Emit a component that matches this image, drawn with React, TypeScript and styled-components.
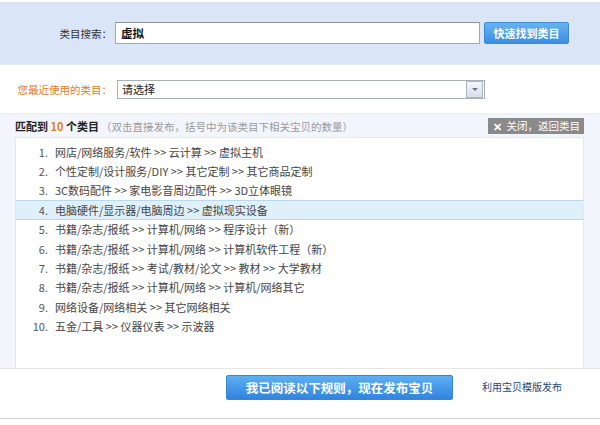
import styled, { createGlobalStyle } from "styled-components";

const GlobalStyle = createGlobalStyle`
  html, body {
    margin: 0;
    padding: 0;
    background: #fff;
  }
  body {
    font-family: "Noto Sans CJK SC", "Liberation Sans", sans-serif;
    font-size: 11px;
    color: #333;
  }
`

const Page = styled.div`
  width: 600px;
  height: 425px;
  display: flex;
  flex-direction: column;
`

const SearchBand = styled.div`
  margin-top: 2px;
  height: 62px;
  background: #dbe5f8;
  border-bottom: 1px solid #e4ebf8;
  display: flex;
  align-items: center;
`

const Label = styled.div<{ $orange?: boolean }>`
  width: 112px;
  text-align: right;
  flex-shrink: 0;
  font-size: 10.5px;
  color: ${({ $orange }) => ($orange ? "#e07b1e" : "#333")};
`

const SearchInput = styled.div`
  margin-left: 3px;
  width: 358px;
  height: 20px;
  border: 1px solid #a3a6ab;
  border-top-color: #8f949a;
  background: #fff;
  padding-left: 5px;
  font-size: 11.5px;
  line-height: 20px;
  color: #111;
  font-weight: bold;
`

const FindButton = styled.div`
  margin-left: 4px;
  width: 83px;
  height: 20px;
  border: 1px solid #3d8ad6;
  border-radius: 2px;
  background: linear-gradient(#67b3f2, #3a8ee2);
  color: #fff;
  font-weight: bold;
  font-size: 11px;
  line-height: 20px;
  text-align: center;
`

const RecentRow = styled.div`
  height: 48px;
  display: flex;
  align-items: center;
`

const Select = styled.div`
  margin-left: 5px;
  width: 362px;
  height: 17px;
  border: 1px solid #a9afb6;
  background: #fff;
  display: flex;
  align-items: center;
  justify-content: space-between;
  padding-left: 4px;
  font-size: 11px;
  color: #222;
`

const Arrow = styled.div`
  width: 15px;
  height: 15px;
  margin-right: 1px;
  border: 1px solid #a8b6c9;
  background: linear-gradient(#f3f6fb, #d6dfeb);
  display: flex;
  align-items: center;
  justify-content: center;
  &::after {
    content: "";
    border-left: 3px solid transparent;
    border-right: 3px solid transparent;
    border-top: 3px solid #66768f;
  }
`

const MatchSection = styled.div`
  height: 254px;
  background: #f2f6fc;
  border-top: 1px solid #e8edf6;
  padding: 0 16px 0 15px;
  display: flex;
  flex-direction: column;
`

const MatchHeader = styled.div`
  height: 23px;
  display: flex;
  align-items: center;
  justify-content: space-between;
`

const MatchTitle = styled.div`
  font-weight: bold;
  color: #222;
  font-size: 11px;
`

const Count = styled.span`
  color: #e3801e;
`

const Hint = styled.span`
  font-weight: normal;
  color: #9a9a9a;
  font-size: 10.5px;
  margin-left: 2px;
`

const CloseButton = styled.div`
  height: 16px;
  padding: 0 4px 0 5px;
  background: #8a8a8a;
  color: #fff;
  font-size: 10.5px;
  line-height: 16px;
  display: flex;
  align-items: center;
  gap: 5px;
`

const CloseX = styled.span`
  font-weight: bold;
  font-size: 11px;
`

const ListBox = styled.div`
  flex: 1;
  background: #fff;
  border: 1px solid #e3e8ef;
  border-bottom: none;
  padding-top: 4px;
`

const Item = styled.div<{ $active?: boolean }>`
  height: 19.4px;
  display: flex;
  align-items: center;
  font-size: 11px;
  color: #444;
  box-sizing: border-box;
  background: ${({ $active }) => ($active ? "#dff0fb" : "transparent")};
  border-top: 1px solid ${({ $active }) => ($active ? "#b9d8ee" : "transparent")};
  border-bottom: 1px solid ${({ $active }) => ($active ? "#b9d8ee" : "transparent")};
`

const Num = styled.span`
  width: 32px;
  text-align: right;
  color: #555;
  flex-shrink: 0;
`

const Path = styled.span`
  margin-left: 7px;
`

const Footer = styled.div`
  height: 51px;
  border-top: 1px solid #e6e6e6;
  border-bottom: 1px solid #cfcfcf;
  display: flex;
  align-items: flex-start;
  padding-top: 6px;
  box-sizing: border-box;
`

const PublishButton = styled.div`
  margin-left: 226px;
  width: 225px;
  height: 23px;
  border: 1px solid #3886d6;
  border-radius: 2px;
  background: linear-gradient(#5eaef2, #2f85de);
  color: #fff;
  font-weight: bold;
  font-size: 12.5px;
  line-height: 23px;
  text-align: center;
`

const TemplateLink = styled.div`
  margin-left: 29px;
  margin-top: 4px;
  font-size: 10px;
  color: #23477f;
`

const items = [
  "网店/网络服务/软件 >> 云计算 >> 虚拟主机",
  "个性定制/设计服务/DIY >> 其它定制 >> 其它商品定制",
  "3C数码配件 >> 家电影音周边配件 >> 3D立体眼镜",
  "电脑硬件/显示器/电脑周边 >> 虚拟现实设备",
  "书籍/杂志/报纸 >> 计算机/网络 >> 程序设计（新）",
  "书籍/杂志/报纸 >> 计算机/网络 >> 计算机软件工程（新）",
  "书籍/杂志/报纸 >> 考试/教材/论文 >> 教材 >> 大学教材",
  "书籍/杂志/报纸 >> 计算机/网络 >> 计算机/网络其它",
  "网络设备/网络相关 >> 其它网络相关",
  "五金/工具 >> 仪器仪表 >> 示波器",
]

export default function App() {
  return (
    <Page>
      <GlobalStyle />
      <SearchBand>
        <Label>类目搜索：</Label>
        <SearchInput>虚拟</SearchInput>
        <FindButton>快速找到类目</FindButton>
      </SearchBand>
      <RecentRow>
        <Label $orange>您最近使用的类目：</Label>
        <Select>
          请选择
          <Arrow />
        </Select>
      </RecentRow>
      <MatchSection>
        <MatchHeader>
          <MatchTitle>
            匹配到 <Count>10</Count> 个类目
            <Hint>（双击直接发布，括号中为该类目下相关宝贝的数量）</Hint>
          </MatchTitle>
          <CloseButton>
            <CloseX>✕</CloseX>关闭，返回类目
          </CloseButton>
        </MatchHeader>
        <ListBox>
          {items.map((text, i) => (
            <Item key={i} $active={i === 3}>
              <Num>{i + 1}.</Num>
              <Path>{text}</Path>
            </Item>
          ))}
        </ListBox>
      </MatchSection>
      <Footer>
        <PublishButton>我已阅读以下规则，现在发布宝贝</PublishButton>
        <TemplateLink>利用宝贝模版发布</TemplateLink>
      </Footer>
    </Page>
  )
}
